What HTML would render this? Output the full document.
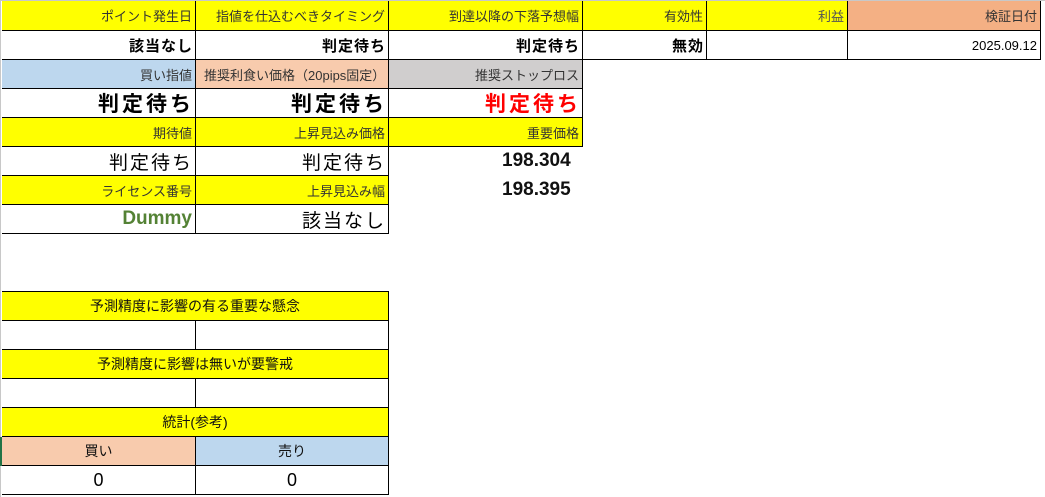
<!DOCTYPE html>
<html><head><meta charset="utf-8"><style>
html,body{margin:0;padding:0;background:#fff;width:1045px;height:497px;overflow:hidden;position:relative;font-family:"Liberation Sans","Noto Sans CJK JP",sans-serif;}
.c{position:absolute;box-sizing:border-box;border:1px solid #000;display:flex;align-items:center;justify-content:flex-end;padding-right:3px;white-space:nowrap;font-size:13px;color:#222;}
.y{background:#ffff00;}
.h{color:#333;}
.b{font-weight:bold;font-size:15px;color:#000;letter-spacing:1px;padding-right:2px;}
.big{font-weight:bold;font-size:21px;letter-spacing:3px;color:#000;padding-right:1px;}
.med{font-size:19px;letter-spacing:2px;color:#000;padding-right:2px;}
.ctr{justify-content:center;padding-right:0;}
.nl{border-left:none;}
.t{position:absolute;font-weight:bold;font-size:19px;color:#111;}
</style></head><body>
<div style="position:absolute;left:0;top:0;width:1045px;height:1px;background:#c8c8c8"></div>
<div style="position:absolute;left:0;top:0;width:1px;height:497px;background:#c8c8c8"></div>

<div class="c y h nl" style="left:2px;top:1px;width:194px;height:30px;border-top:none">ポイント発生日</div>
<div class="c y h" style="left:195px;top:1px;width:194px;height:30px;border-top:none">指値を仕込むべきタイミング</div>
<div class="c y h" style="left:388px;top:1px;width:195px;height:30px;border-top:none">到達以降の下落予想幅</div>
<div class="c y h" style="left:582px;top:1px;width:125px;height:30px;border-top:none">有効性</div>
<div class="c y h" style="left:706px;top:1px;width:142px;height:30px;border-top:none;color:#555">利益</div>
<div class="c h" style="left:847px;top:1px;width:194px;height:30px;border-top:none;background:#f4b084">検証日付</div>

<div class="c b nl" style="left:2px;top:30px;width:194px;height:30px">該当なし</div>
<div class="c b" style="left:195px;top:30px;width:194px;height:30px">判定待ち</div>
<div class="c b" style="left:388px;top:30px;width:195px;height:30px">判定待ち</div>
<div class="c b" style="left:582px;top:30px;width:125px;height:30px">無効</div>
<div class="c" style="left:706px;top:30px;width:142px;height:30px"></div>
<div class="c" style="left:847px;top:30px;width:194px;height:30px;font-size:13px;color:#000">2025.09.12</div>

<div class="c h nl" style="left:2px;top:59px;width:194px;height:30px;background:#bdd7ee">買い指値</div>
<div class="c h" style="left:195px;top:59px;width:194px;height:30px;background:#f8cbad;justify-content:flex-start;padding-left:8px">推奨利食い価格（20pips固定）</div>
<div class="c h" style="left:388px;top:59px;width:195px;height:30px;background:#d0cece">推奨ストップロス</div>

<div class="c big nl" style="left:2px;top:88px;width:194px;height:30px">判定待ち</div>
<div class="c big" style="left:195px;top:88px;width:194px;height:30px">判定待ち</div>
<div class="c big" style="left:388px;top:88px;width:195px;height:30px;color:#ff0000">判定待ち</div>

<div class="c y h nl" style="left:2px;top:117px;width:194px;height:30px">期待値</div>
<div class="c y h" style="left:195px;top:117px;width:194px;height:30px">上昇見込み価格</div>
<div class="c y h" style="left:388px;top:117px;width:195px;height:30px">重要価格</div>

<div class="c med nl" style="left:2px;top:146px;width:194px;height:30px">判定待ち</div>
<div class="c med" style="left:195px;top:146px;width:194px;height:30px">判定待ち</div>
<div class="t" style="left:502px;top:150px">198.304</div>

<div class="c y h nl" style="left:2px;top:175px;width:194px;height:30px">ライセンス番号</div>
<div class="c y h" style="left:195px;top:175px;width:194px;height:30px">上昇見込み幅</div>
<div class="t" style="left:502px;top:179px">198.395</div>

<div class="c nl" style="left:2px;top:204px;width:194px;height:30px;font-weight:bold;font-size:19px;color:#548235">Dummy</div>
<div class="c med" style="left:195px;top:204px;width:194px;height:30px">該当なし</div>

<div class="c y ctr nl" style="left:2px;top:291px;width:387px;height:30px;color:#111;font-size:14px">予測精度に影響の有る重要な懸念</div>
<div class="c nl" style="left:2px;top:320px;width:194px;height:30px"></div>
<div class="c" style="left:195px;top:320px;width:194px;height:30px"></div>
<div class="c y ctr nl" style="left:2px;top:349px;width:387px;height:30px;color:#111;font-size:14px">予測精度に影響は無いが要警戒</div>
<div class="c nl" style="left:2px;top:378px;width:194px;height:30px"></div>
<div class="c" style="left:195px;top:378px;width:194px;height:30px"></div>
<div class="c y ctr nl" style="left:2px;top:407px;width:387px;height:30px;color:#111;font-size:14px">統計(参考)</div>
<div class="c ctr nl" style="left:2px;top:436px;width:194px;height:30px;background:#f8cbad;color:#111;font-size:14px">買い</div>
<div class="c ctr" style="left:195px;top:436px;width:194px;height:30px;background:#bdd7ee;color:#111;font-size:14px">売り</div>
<div class="c ctr nl" style="left:2px;top:465px;width:194px;height:30px;font-size:18px;color:#000">0</div>
<div class="c ctr" style="left:195px;top:465px;width:194px;height:30px;font-size:18px;color:#000">0</div>
<div style="position:absolute;left:0;top:437px;width:2px;height:29px;background:#217346"></div>
</body></html>
